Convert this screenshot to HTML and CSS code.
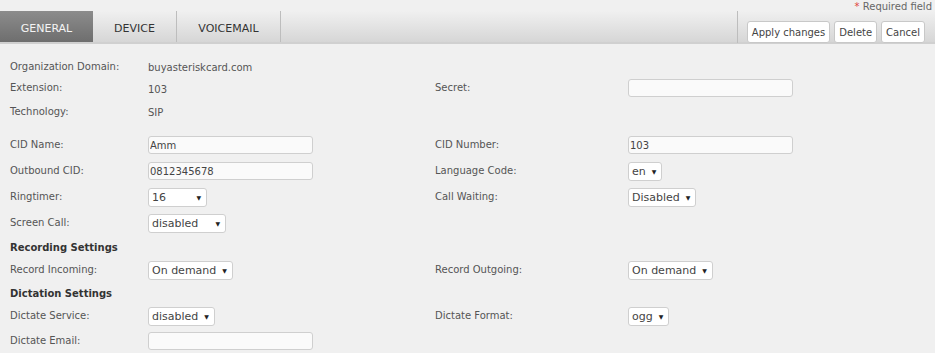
FILE: index.html
```html
<!DOCTYPE html>
<html lang="en">

<head>
    <meta charset="UTF-8">
    <title>Extension 103</title>
    <link rel="stylesheet" href="styles.css">
</head>

<body>
    <div class="required-note"><span class="star">*</span> Required field</div>

    <div class="toolbar">
        <div class="tabs">
            <div class="tab active">GENERAL</div>
            <div class="tab">DEVICE</div>
            <div class="tab">VOICEMAIL</div>
        </div>
        <div class="actions">
            <button>Apply changes</button>
            <button>Delete</button>
            <button>Cancel</button>
        </div>
    </div>

    <div class="form">
        <div class="row r-text">
            <div class="label">Organization Domain:</div>
            <div class="value">buyasteriskcard.com</div>
        </div>
        <div class="row r-text2">
            <div class="label">Extension:</div>
            <div class="value low">103</div>
            <div class="label">Secret:</div>
            <div class="value"><input type="text" class="wide"></div>
        </div>
        <div class="row r-text3">
            <div class="label">Technology:</div>
            <div class="value">SIP</div>
        </div>

        <div class="row r-field first">
            <div class="label">CID Name:</div>
            <div class="value"><input type="text" class="wide" value="Amm"></div>
            <div class="label">CID Number:</div>
            <div class="value"><input type="text" class="wide" value="103"></div>
        </div>
        <div class="row r-field">
            <div class="label">Outbound CID:</div>
            <div class="value"><input type="text" class="wide" value="0812345678"></div>
            <div class="label">Language Code:</div>
            <div class="value"><span class="select">en</span></div>
        </div>
        <div class="row r-field">
            <div class="label">Ringtimer:</div>
            <div class="value"><span class="select w-ring">16</span></div>
            <div class="label">Call Waiting:</div>
            <div class="value"><span class="select">Disabled</span></div>
        </div>
        <div class="row r-field">
            <div class="label">Screen Call:</div>
            <div class="value"><span class="select w-screen">disabled</span></div>
        </div>

        <div class="row r-head">
            <div class="heading">Recording Settings</div>
        </div>
        <div class="row r-field2">
            <div class="label">Record Incoming:</div>
            <div class="value"><span class="select">On demand</span></div>
            <div class="label">Record Outgoing:</div>
            <div class="value"><span class="select">On demand</span></div>
        </div>

        <div class="row r-head">
            <div class="heading">Dictation Settings</div>
        </div>
        <div class="row r-field2">
            <div class="label">Dictate Service:</div>
            <div class="value"><span class="select">disabled</span></div>
            <div class="label">Dictate Format:</div>
            <div class="value"><span class="select">ogg</span></div>
        </div>
        <div class="row r-field last">
            <div class="label">Dictate Email:</div>
            <div class="value"><input type="text" class="wide"></div>
        </div>
    </div>
</body>

</html>
```

FILE: styles.css
```css
body,
html {
    margin: 0;
    height: 100%;
    overflow: hidden;
    background-color: #f0f0f0;
    font-family: "DejaVu Sans", Verdana, sans-serif;
    font-size: 10px;
    color: #555;
}

.required-note {
    height: 11px;
    line-height: 13px;
    text-align: right;
    padding-right: 3px;
    font-size: 10px;
    color: #666;
}

.star {
    color: #e04040;
}

.toolbar {
    display: flex;
    justify-content: space-between;
    height: 31px;
    background: linear-gradient(#f0f0f0, #d6d6d6);
    border-bottom: 2px solid #d0d0d0;
}

.tabs {
    display: flex;
}

.tab {
    display: flex;
    align-items: center;
    justify-content: center;
    padding-top: 4px;
    font-size: 11px;
    color: #333;
    border-right: 1px solid #bdbdbd;
}

.tab:nth-child(1) {
    width: 93px;
    border-right: none;
}

.tab:nth-child(2) {
    width: 83px;
}

.tab:nth-child(3) {
    width: 103px;
}

.tab.active {
    background: linear-gradient(#8c8c8c, #6e6e6e);
    color: #f4f4f4;
}

.actions {
    display: flex;
    align-items: flex-end;
    gap: 4px;
    padding-left: 9px;
    padding-right: 10px;
    border-left: 1px solid #bdbdbd;
    margin-bottom: -1px;
}

button {
    height: 22px;
    padding: 0 4px;
    background-color: #fff;
    border: 1px solid #c8c8c8;
    border-radius: 3px;
    font-family: "DejaVu Sans", Verdana, sans-serif;
    font-size: 10px;
    color: #444;
}

.form {
    padding: 13px 0 0 10px;
}

.row {
    display: grid;
    grid-template-columns: 138px 287px 193px auto;
    align-items: center;
}

.r-text {
    height: 20px;
}

.r-text2 {
    height: 22px;
}

.r-text3 {
    height: 26px;
}

.r-field {
    height: 26px;
}

.r-field.first {
    margin-top: 7px;
}

.r-field2 {
    height: 24px;
}

.r-head {
    height: 22px;
}

.label {
    padding-bottom: 2px;
}

.value.low {
    padding-top: 3px;
}

.heading {
    grid-column: 1 / 3;
    font-weight: bold;
    color: #333;
}

input {
    box-sizing: border-box;
    display: block;
    height: 18px;
    padding: 0 1px;
    background-color: #fafafa;
    border: 1px solid #cfcfcf;
    border-radius: 3px;
    font-family: "DejaVu Sans", Verdana, sans-serif;
    font-size: 10px;
    color: #444;
}

.wide {
    width: 165px;
}

.select {
    box-sizing: border-box;
    display: inline-flex;
    align-items: center;
    height: 19px;
    padding: 0 5px 0 3px;
    background-color: #fff;
    border: 1px solid #cfcfcf;
    border-radius: 3px;
    font-size: 11px;
    color: #444;
    vertical-align: middle;
}

.select::after {
    content: "\25BC";
    font-size: 6px;
    color: #222;
    margin-left: 6px;
}

.w-ring {
    width: 59px;
    justify-content: space-between;
}

.w-screen {
    width: 78px;
    justify-content: space-between;
}
```
